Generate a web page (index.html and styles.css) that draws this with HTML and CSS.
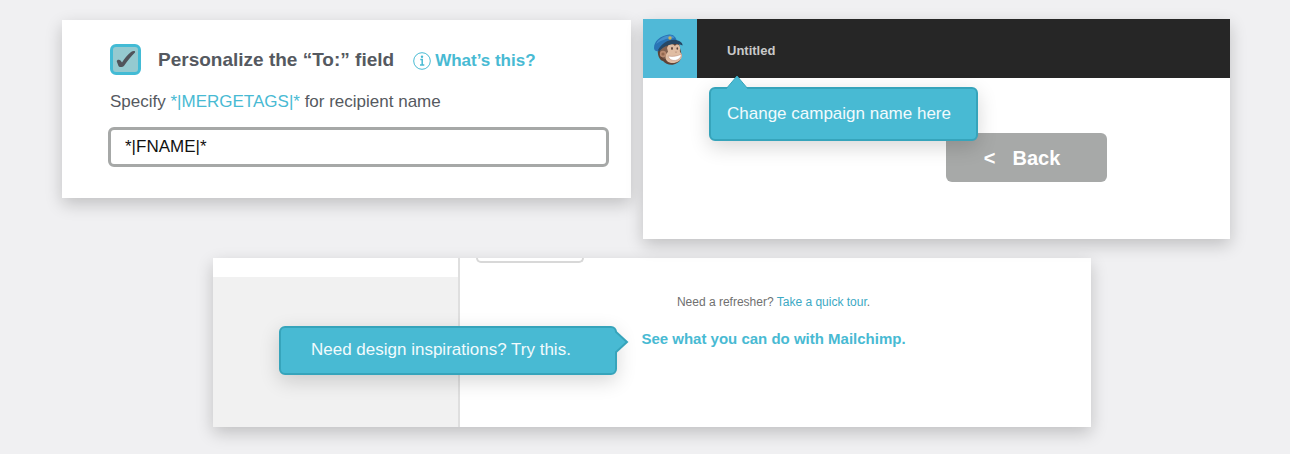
FILE: index.html
```html
<!DOCTYPE html>
<html lang="en">
<head>
<meta charset="utf-8">
<meta name="viewport" content="width=device-width, initial-scale=1">
<title>Campaign setup</title>
<link rel="stylesheet" href="styles.css">
</head>
<body>
<main class="board">
  <div class="top-row">
    <section class="card recipient">
      <div class="recipient-head">
        <span class="check">
          <input class="check-input" type="checkbox" id="personalize" checked>
          <svg class="check-mark" viewBox="0 0 31 31" aria-hidden="true"><path d="M6.800 17.500C6.500 15.500 9.600 15.200 10.500 16.500L12 18.600C14.600 14.500 17.500 10.500 21 8C22.800 6.900 25.600 6.500 25 8.500C21 12.300 17.500 17 14.300 21.500C12.800 23.400 9 23.800 8.300 21.500Z"/></svg>
        </span>
        <label class="recipient-title" for="personalize">Personalize the “To:” field</label>
        <a class="help" href="#help">
          <svg class="help-icon" viewBox="0 0 18 18" aria-hidden="true"><circle cx="9" cy="9" r="8.300"/><path stroke-width="1.500" d="M7.300 7.500H9.200V13M7 13H11.300"/><circle class="dot" cx="9" cy="4.700" r="1.200"/></svg>
          What’s this?
        </a>
      </div>
      <label class="hint" for="name">Specify <span class="tag">*|MERGETAGS|*</span> for recipient name</label>
      <input class="field" id="name" type="text" value="*|FNAME|*">
    </section>

    <section class="card campaign">
      <header class="bar">
        <a class="logo" href="#home" aria-label="Mailchimp">
          <svg class="chimp" viewBox="2 0 36 40" aria-hidden="true">
            <path fill="#5f4336" d="M8 19C7 25 9 31 13 32C16 36 23 37 27 34C31 32 32 28 31 23L29 15L18 12Z"/>
            <path fill="#81604f" d="M10 20L16 15L18 22L15 30C11 29 10 25 10 20Z"/>
            <path fill="#e0bda3" d="M17 19C18 14 23 14 25 17C27 14 31 16 30 21C29 23 32 24 32 27C31 34 21 36 17 32C14 29 16 24 18 23Z"/>
            <circle cx="13" cy="25" r="3.200" fill="#b98a70"/>
            <circle cx="13" cy="25" r="1.600" fill="#94684f"/>
            <ellipse cx="22" cy="19.500" rx=".9" ry="1.400" fill="#5e453b"/>
            <ellipse cx="27.300" cy="19.500" rx=".8" ry="1.300" fill="#5e453b"/>
            <path fill="#a9806b" d="M24.700 22.800H27.300L26 23.800Z"/>
            <path fill="#fff" stroke="#b58570" stroke-width=".5" d="M18 27C23 28 28 27 31.500 25C31 32.500 20 34 18 27Z"/>
            <path fill="#2973b5" d="M4 19C4 12 10 7 19 5.500C23 5 26 8 27 12L27 14C19 12 13 16 9 22C6 23 4 21 4 19Z"/>
            <path fill="#4390cd" d="M6 15C9 9 16 6 21 6.500C24 7 24 8 24 9C16 9 10 12 6 15Z"/>
            <path fill="#264765" d="M8 21C12 14 19 10 26 11C31 12 33 15 32.500 16.500C25 13.500 16 15 9 22.500Z"/>
            <circle cx="20" cy="9" r="1.700" fill="#c9b15b"/>
          </svg>
        </a>
        <div class="name">
          <span class="name-text">Untitled</span>
          <div class="tip tip-below" role="tooltip">
            <svg class="arrow-up" viewBox="0 0 24 14" aria-hidden="true"><path d="M1 14L12 1L23 14"/></svg>
            Change campaign name here
          </div>
        </div>
      </header>
      <div class="campaign-body">
        <button class="back" type="button"><span>&lt;</span><span>Back</span></button>
      </div>
    </section>
  </div>

  <section class="card tour">
    <aside class="side">
      <div class="tip tip-side" role="tooltip">
        Need design inspirations? Try this.
        <svg class="arrow-right" viewBox="0 0 14 24" aria-hidden="true"><path d="M0 1L12 12L0 23"/></svg>
      </div>
    </aside>
    <div class="tour-body">
      <div class="stub"></div>
      <p class="refresher">Need a refresher? <a href="#tour">Take a quick tour</a>.</p>
      <a class="discover" href="#discover">See what you can do with Mailchimp.</a>
    </div>
  </section>
</main>
</body>
</html>
```
FILE: styles.css
```css
* { box-sizing: border-box; }

body {
  margin: 0;
  min-height: 100vh;
  background: #f0f0f2;
  font-family: "Liberation Sans", Arial, sans-serif;
  color: #555960;
}

a { color: #48bad3; text-decoration: none; }
button, input { font: inherit; }

.board { padding: 19px 60px 27px 62px; }

.top-row {
  display: grid;
  grid-template-columns: 569fr 587fr;
  align-items: start;
  gap: 12px;
}

.card {
  background: #fff;
  box-shadow: 0 6px 16px rgba(0, 0, 0, .2);
}

.recipient {
  display: flex;
  flex-direction: column;
  margin-top: 1px;
  padding: 24px 22px 31px 46px;
}

.recipient-head {
  display: flex;
  align-items: center;
  padding-left: 2px;
}

.check { display: grid; }
.check-input, .check-mark { grid-area: 1 / 1; width: 31px; height: 31px; }
.check-input {
  appearance: none;
  margin: 0;
  border: 3px solid #43bbd5;
  border-radius: 6px;
  background: #95cad0;
}
.check-mark { fill: #50545b; pointer-events: none; visibility: hidden; }
.check-input:checked + .check-mark { visibility: visible; }

.recipient-title { margin-left: 17px; font-size: 19px; font-weight: bold; }

.help {
  display: flex;
  align-items: center;
  gap: 4px;
  margin-left: 19px;
  padding-top: 2px;
  font-size: 17px;
  font-weight: bold;
}
.help-icon { width: 18px; height: 18px; fill: none; stroke: currentColor; }
.help-icon .dot { fill: currentColor; stroke: none; }

.hint { margin-top: 17px; padding-left: 2px; font-size: 17px; line-height: 20px; }
.tag { color: #48bad3; }

.field {
  width: 100%;
  height: 40px;
  margin-top: 15px;
  padding: 0 14px;
  border: 3px solid #a6a8a7;
  border-radius: 6px;
  background: #fff;
  color: #111;
  font-size: 17px;
}

.bar { display: flex; height: 59px; background: #262626; }
.logo {
  display: grid;
  place-items: center;
  width: 54px;
  background: #50b9d7;
}
.chimp { width: 36px; height: 40px; }

.name {
  position: relative;
  display: flex;
  align-items: center;
  margin-left: 30px;
  color: #c9c9c9;
  font-size: 13px;
  font-weight: bold;
}
.name-text { padding-top: 4px; }

.tip {
  position: absolute;
  z-index: 1;
  border: 2px solid #36a4bb;
  border-radius: 6px;
  background: #48bad3;
  box-shadow: 0 6px 20px rgba(0, 0, 0, .16);
  color: #f2fbfd;
  font-size: 17px;
  font-weight: normal;
  line-height: 20px;
  white-space: nowrap;
}
.tip svg { position: absolute; fill: #48bad3; stroke: #36a4bb; stroke-width: 2; }

.tip-below { top: 68px; left: -18px; padding: 15px 25px 15px 16px; }
.tip .arrow-up {
  bottom: 100%;
  left: 14px;
  width: 24px;
  height: 14px;
  stroke-width: 1;
}

.campaign-body {
  display: flex;
  justify-content: flex-end;
  padding: 55px 123px 57px;
}
.back {
  display: flex;
  justify-content: center;
  align-items: center;
  gap: 17px;
  width: 161px;
  height: 49px;
  padding: 1px 9px 0 0;
  border: 0;
  border-radius: 6px;
  background: #a7a9a8;
  color: #fff;
  font-size: 20px;
  font-weight: bold;
}

.tour {
  display: grid;
  grid-template-columns: 247px 1fr;
  min-height: 169px;
  margin: 19px 139px 0 151px;
}
.side {
  position: relative;
  border-right: 2px solid #dfdfdf;
  background: linear-gradient(#fff 19px, #f1f1f1 19px);
}
.tip-side { top: 68px; left: 66px; padding: 12px 44px 13px 30px; }
.arrow-right { top: 2px; left: 100%; width: 14px; height: 24px; }

.tour-body {
  display: flex;
  flex-direction: column;
  align-items: center;
  padding: 0 4px 0 0;
}
.stub {
  align-self: flex-start;
  width: 108px;
  height: 5px;
  margin-left: 16px;
  border: 2px solid #d8d8d8;
  border-top: 0;
  border-radius: 0 0 6px 6px;
}
.refresher { margin: 32px 0 0; color: #707070; font-size: 12px; line-height: 14px; }
.refresher a { color: #3ba9c4; }
.discover { margin-top: 21px; font-size: 15px; font-weight: bold; line-height: 18px; }
```
